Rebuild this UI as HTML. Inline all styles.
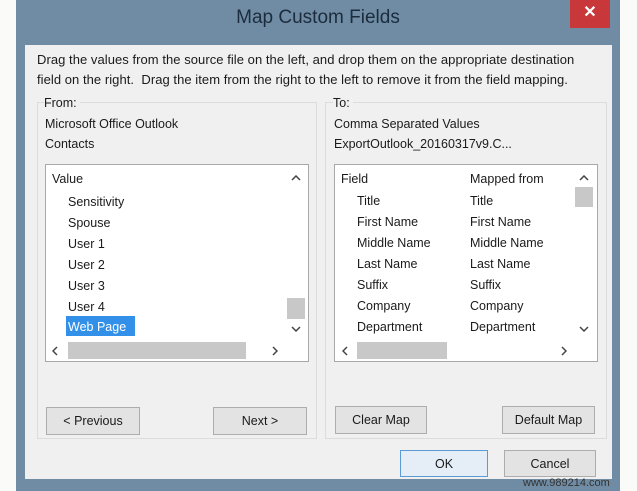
<!DOCTYPE html><html><head><style>
body{margin:0;width:637px;height:491px;background:#fafaf8;position:relative;overflow:hidden;font-family:"Liberation Sans",sans-serif;color:#1a1a1a}
.a{position:absolute}
.frame{left:16px;top:0;width:604px;height:491px;background:#6f8ca4}
.content{left:25px;top:45px;width:587px;height:434px;background:#f0f0f0}
.title{left:16px;top:7px;width:604px;text-align:center;font-size:19px;color:#1c2c3c}
.close{left:570px;top:0;width:40px;height:28px;background:#c8383a;color:#fff;text-align:center;font-size:16px;line-height:26px;font-weight:bold}
.t{font-size:12.5px;white-space:nowrap}
.gb{border:1px solid #dcdcdc}
.list{background:#fff;border:1px solid #a8a8a8}
.btn{background:#e3e3e3;border:1px solid #adadad;text-align:center;font-size:12.5px;line-height:26px;box-sizing:border-box}
.sb{background:#c8c8c8}
svg.c{position:absolute;width:10px;height:6px}
</style></head><body>
<div class="a frame"></div>
<div class="a content"></div>
<div class="a title">Map Custom Fields</div>
<div class="a close">✕</div>
<div class="a t" style="left:37px;top:50px;line-height:20px;font-size:13px;letter-spacing:0.05px">Drag the values from the source file on the left, and drop them on the appropriate destination<br>field on the right.&nbsp; Drag the item from the right to the left to remove it from the field mapping.</div>
<div class="a gb" style="left:37px;top:102px;width:278px;height:335px"></div>
<div class="a gb" style="left:325px;top:102px;width:280px;height:335px"></div>
<div class="a t" style="left:44px;top:96px;background:#f0f0f0;padding-right:3px">From:</div>
<div class="a t" style="left:45px;top:117px">Microsoft Office Outlook</div>
<div class="a t" style="left:45px;top:137px">Contacts</div>
<div class="a t" style="left:333px;top:96px;background:#f0f0f0;padding-right:3px">To:</div>
<div class="a t" style="left:334px;top:117px">Comma Separated Values</div>
<div class="a t" style="left:334px;top:137px">ExportOutlook_20160317v9.C...</div>

<div class="a list" style="left:45px;top:164px;width:262px;height:196px"></div>
<div class="a t" style="left:52px;top:172px">Value</div>
<div class="a t" style="left:68px;top:195px">Sensitivity</div>
<div class="a t" style="left:68px;top:216px">Spouse</div>
<div class="a t" style="left:68px;top:237px">User 1</div>
<div class="a t" style="left:68px;top:258px">User 2</div>
<div class="a t" style="left:68px;top:279px">User 3</div>
<div class="a t" style="left:68px;top:300px">User 4</div>
<div class="a" style="left:66px;top:316px;width:69px;height:20px;background:#3390e8"></div>
<div class="a t" style="left:68px;top:320px;color:#fff">Web Page</div>
<div class="a sb" style="left:287px;top:298px;width:18px;height:21px"></div>
<svg class="c" style="left:291px;top:175px" viewBox="0 0 10 6"><path d="M1 5L5 1L9 5" fill="none" stroke="#444" stroke-width="1.5"/></svg>
<svg class="c" style="left:291px;top:326px" viewBox="0 0 10 6"><path d="M1 1L5 5L9 1" fill="none" stroke="#444" stroke-width="1.5"/></svg>
<div class="a sb" style="left:68px;top:342px;width:178px;height:17px"></div>
<svg class="a" style="left:52px;top:346px;width:6px;height:10px" viewBox="0 0 6 10"><path d="M5 1L1 5L5 9" fill="none" stroke="#444" stroke-width="1.5"/></svg>
<svg class="a" style="left:272px;top:346px;width:6px;height:10px" viewBox="0 0 6 10"><path d="M1 1L5 5L1 9" fill="none" stroke="#444" stroke-width="1.5"/></svg>

<div class="a list" style="left:334px;top:164px;width:262px;height:196px"></div>
<div class="a t" style="left:341px;top:172px">Field</div>
<div class="a t" style="left:470px;top:172px">Mapped from</div>
<div class="a sb" style="left:575px;top:187px;width:18px;height:20px"></div>
<svg class="c" style="left:579px;top:175px" viewBox="0 0 10 6"><path d="M1 5L5 1L9 5" fill="none" stroke="#444" stroke-width="1.5"/></svg>
<svg class="c" style="left:579px;top:326px" viewBox="0 0 10 6"><path d="M1 1L5 5L9 1" fill="none" stroke="#444" stroke-width="1.5"/></svg>
<div class="a sb" style="left:357px;top:342px;width:90px;height:17px"></div>
<svg class="a" style="left:342px;top:346px;width:6px;height:10px" viewBox="0 0 6 10"><path d="M5 1L1 5L5 9" fill="none" stroke="#444" stroke-width="1.5"/></svg>
<svg class="a" style="left:561px;top:346px;width:6px;height:10px" viewBox="0 0 6 10"><path d="M1 1L5 5L1 9" fill="none" stroke="#444" stroke-width="1.5"/></svg>
<div class="a t" style="left:357px;top:191px;line-height:21px">Title<br>First Name<br>Middle Name<br>Last Name<br>Suffix<br>Company<br>Department</div>
<div class="a t" style="left:470px;top:191px;line-height:21px">Title<br>First Name<br>Middle Name<br>Last Name<br>Suffix<br>Company<br>Department</div>

<div class="a btn" style="left:46px;top:407px;width:94px;height:28px">&lt; Previous</div>
<div class="a btn" style="left:213px;top:407px;width:94px;height:28px">Next &gt;</div>
<div class="a btn" style="left:335px;top:406px;width:92px;height:28px">Clear Map</div>
<div class="a btn" style="left:502px;top:406px;width:93px;height:28px">Default Map</div>
<div class="a btn" style="left:400px;top:450px;width:88px;height:27px;border-color:#5b9bd5;background:#e5eef7">OK</div>
<div class="a btn" style="left:504px;top:450px;width:92px;height:27px">Cancel</div>
<div class="a" style="left:523px;top:477px;font-size:11px;color:#333">www.989214.com</div>
</body></html>
